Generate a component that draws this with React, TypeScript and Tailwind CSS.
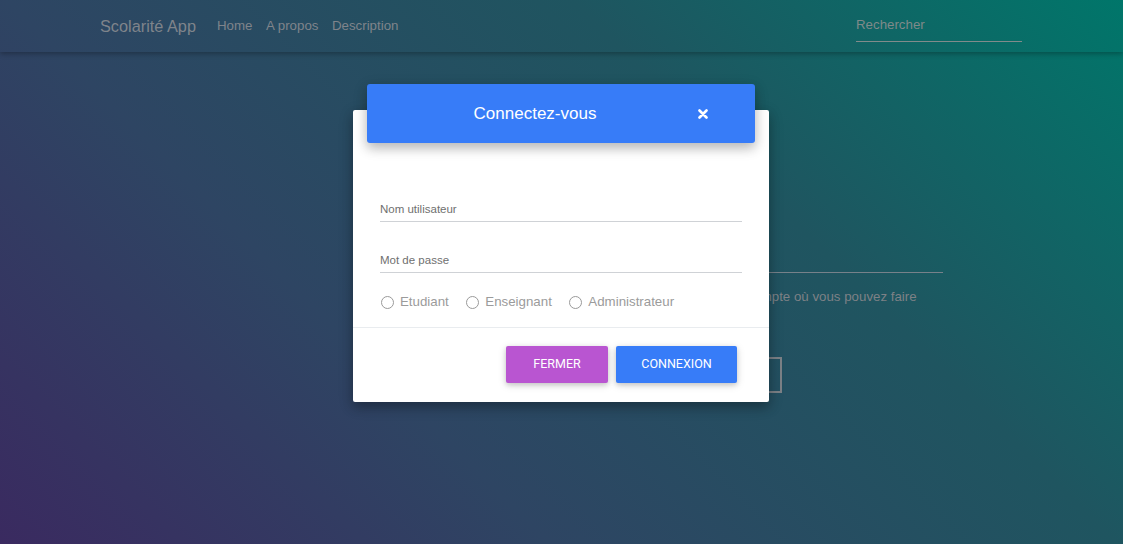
export default function App() {
  return (
    <div className="relative h-[544px] w-full overflow-hidden bg-[linear-gradient(45deg,#3a2a60_0%,#2e4563_33%,#1f5560_67%,#00766a_100%)] font-['Liberation_Sans',Arial,sans-serif]">
      <nav className="flex h-[52px] items-start pl-[100px] pr-[101px] pt-[16px] shadow-[0_2px_5px_rgba(0,0,0,0.28)]">
        <span className="text-[16.3px] leading-[20px] text-[#7f848b]">Scolarité App</span>
        <ul className="ml-[21px] flex gap-[13.5px] text-[13.3px] leading-[20px] text-[#7f848b]">
          <li>Home</li>
          <li>A propos</li>
          <li>Description</li>
        </ul>
        <div className="ml-auto mt-[1px] w-[166px] border-b border-[#818b8b] pb-[8px] text-[13.3px] leading-[16px] text-[#7f8a8a]">
          Rechercher
        </div>
      </nav>

      <main className="ml-[689px] w-[254px] pt-[199px]">
        <div className="h-[22px] border-b border-[#77818a]" />
        <p className="mt-[14px] whitespace-nowrap text-[13.3px] leading-[20px] text-[#7d8186]">
          Créez un compte où vous pouvez faire
        </p>
        <div className="mt-[50px] h-[36px] w-[93px] border-2 border-[#7b8086]" />
      </main>

      <div className="absolute inset-0 flex items-start justify-center pr-[1px] pt-[110px]">
        <div className="w-[416px] rounded-[2px] bg-white shadow-[0_5px_11px_rgba(0,0,0,0.2),0_4px_15px_rgba(0,0,0,0.18)]">
          <div className="mx-[14px] -mt-[26px] flex h-[59px] items-center rounded-[3px] bg-[#377cf8] text-white shadow-[0_5px_11px_rgba(0,0,0,0.18),0_4px_15px_rgba(0,0,0,0.15)]">
            <div className="flex-1 pl-[5px] text-center text-[17px]">Connectez-vous</div>
            <svg className="mr-[47px] h-[10px] w-[10px]" viewBox="0 0 10 10">
              <path d="M1.5 1.5 L8.5 8.5 M8.5 1.5 L1.5 8.5" stroke="white" strokeWidth="2.6" strokeLinecap="round" />
            </svg>
          </div>

          <div className="px-[27px] pb-[15px] pt-[58px]">
            <div className="border-b border-[#cfd2d6] pb-[4px] text-[11.5px] leading-[16px] text-[#6f6f6f]">Nom utilisateur</div>
            <div className="mt-[30px] border-b border-[#cfd2d6] pb-[4px] text-[11.5px] leading-[16px] text-[#6f6f6f]">Mot de passe</div>
            <div className="mt-[19px] flex items-center gap-[17.5px] pl-[1px] text-[13.3px] leading-[20px] text-[#9b9b9b]">
              {["Etudiant", "Enseignant", "Administrateur"].map((r) => (
                <label key={r} className="flex items-center">
                  <span className="mr-[6px] h-[13px] w-[13px] rounded-full border border-[#9a9a9a]" />
                  {r}
                </label>
              ))}
            </div>
          </div>

          <div className="flex justify-end gap-[8px] border-t border-[#e9ecef] pb-[19px] pr-[32px] pt-[18px] font-['Roboto',sans-serif]">
            <button className="h-[37px] w-[102px] rounded-[2px] bg-[#b955d1] text-[12.5px] font-normal text-white shadow-[0_2px_5px_rgba(0,0,0,0.16),0_2px_10px_rgba(0,0,0,0.12)]">
              FERMER
            </button>
            <button className="h-[37px] w-[121px] rounded-[2px] bg-[#377cf8] text-[12.5px] font-normal text-white shadow-[0_2px_5px_rgba(0,0,0,0.16),0_2px_10px_rgba(0,0,0,0.12)]">
              CONNEXION
            </button>
          </div>
        </div>
      </div>
    </div>
  );
}
